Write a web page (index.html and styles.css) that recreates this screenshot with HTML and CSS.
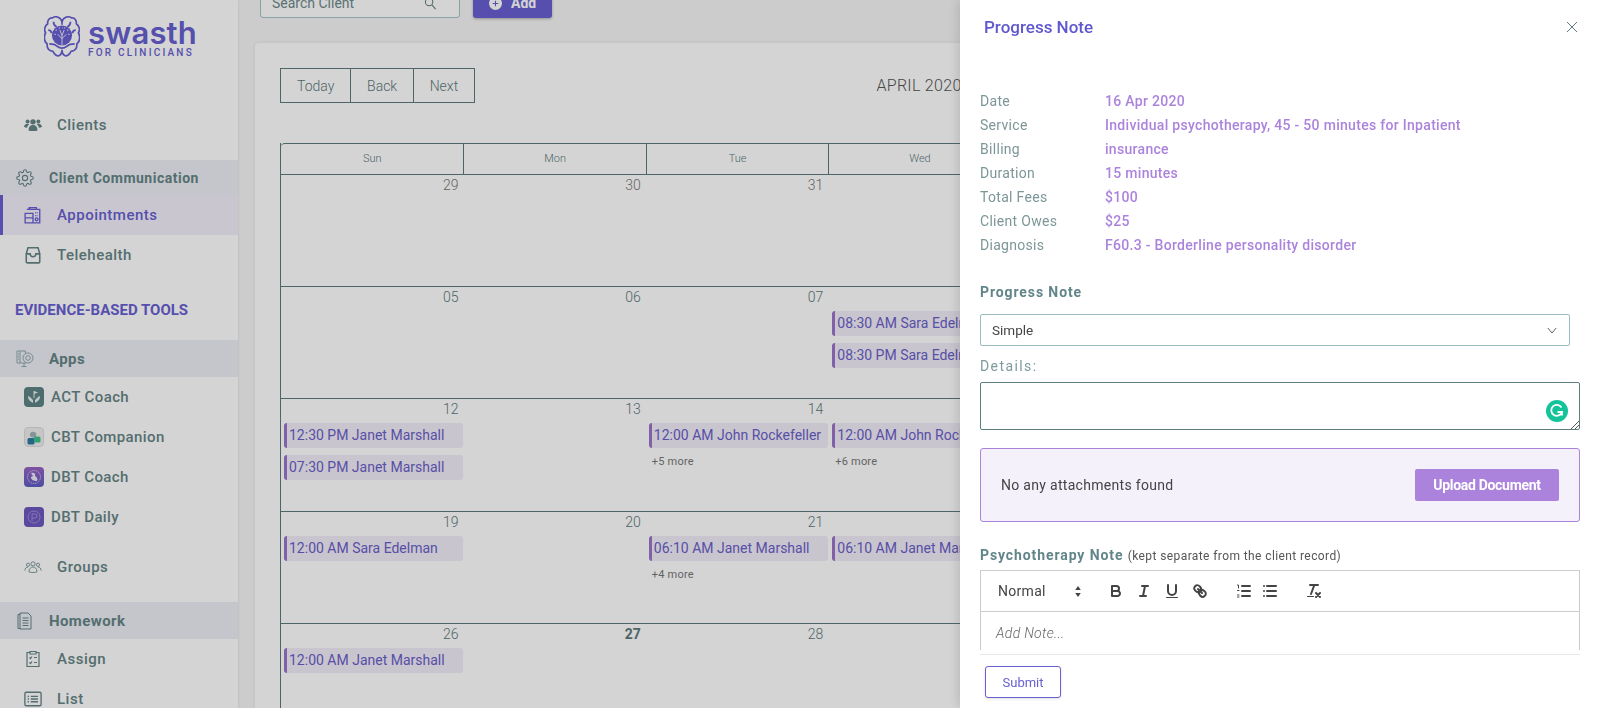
FILE: index.html
```html
<!DOCTYPE html>
<html lang="en">
  <head>
    <meta charset="UTF-8" />
    <title>Swasth - Appointments</title>
    <link rel="stylesheet" href="styles.css">
  </head>
  <body>
    <div class="app">
      <aside class="sidebar">
        <div class="logo">
          <svg class="brain" viewBox="1 1 34 38" fill="none" stroke="#685fd2" stroke-width="1.6" stroke-linejoin="round">
            <path d="M18 6C17 2 12 0 9 2.5 6 2 4 5 4.5 8 1.500 10 .8 14 2.500 16.500 .6 20 1 25 4 27c-.5 4 2 7 5.500 7 1 3 4 5 6 4 1.500-.8 2.500-3 2.500-5 0 2 1 4.200 2.500 5 2 1 5-1 6-4 3.500 0 6-3 5.500-7 3-2 3.400-7 1.500-10.500C35.200 14 34.500 10 31.500 8 32 5 30 2 27 2.500 24 0 19 2 18 6Z"/>
            <path d="M18 6v3M10 6c0 3 1 4 3 5M26 6c0 3-1 4-3 5M5 14c2 0 3 1 3 3M31 14c-2 0-3 1-3 3M6 27c3 0 5 0 7 2 2 1.500 3 2 5 2 2 0 3-.5 5-2 2-2 4-2 7-2"/>
            <circle cx="18" cy="19" r="9.500" fill="#685fd2" stroke="none"/>
            <path d="M18 28v-9M18 22l-4-4M18 22l4-4M18 19l-2-5M18 19l2-5" stroke="#fff" stroke-width=".8"/>
            <path d="M12 14h1M15 12h1M20 12h1M23 14h1M11 18h1M24 18h1M18 12h.6" stroke="#fff" stroke-width="1.100"/>
          </svg>
          <div class="wordmark">
            <span class="wordmark-name">swasth</span>
            <span class="wordmark-sub">FOR CLINICIANS</span>
          </div>
        </div>

        <a class="item item-first">
          <svg class="icon" viewBox="0 0 20 16" fill="#668586">
            <circle cx="10" cy="4.500" r="3"/><circle cx="4" cy="4" r="2.200"/><circle cx="16" cy="4" r="2.200"/>
            <path d="M5 14c0-4 2-6 5-6s5 2 5 6c-2 1-8 1-10 0ZM0 10c0-2 1.500-3.500 4-3.500 1 0 1.500.3 2 .8C4.500 8.300 3.800 9.500 3.500 11 2 11 .8 10.700 0 10ZM20 10c0-2-1.500-3.500-4-3.500-1 0-1.500.3-2 .8 1.500 1 2.200 2.200 2.500 3.700 1.500 0 2.700-.3 3.500-1Z"/>
          </svg>
          Clients
        </a>

        <div class="band band-comm">
          <svg class="band-icon" viewBox="0 0 24 24" fill="none" stroke="#668586" stroke-width="1.500">
            <circle cx="12" cy="12" r="3.500"/>
            <path d="M19.400 15a1.650 1.650 0 0 0 .33 1.820l.06.06a2 2 0 0 1 0 2.830 2 2 0 0 1-2.830 0l-.06-.06a1.650 1.650 0 0 0-1.820-.33 1.650 1.650 0 0 0-1 1.510V21a2 2 0 0 1-2 2 2 2 0 0 1-2-2v-.09A1.650 1.650 0 0 0 9 19.400a1.650 1.650 0 0 0-1.820.33l-.06.06a2 2 0 0 1-2.830 0 2 2 0 0 1 0-2.830l.06-.06a1.650 1.650 0 0 0 .33-1.820 1.650 1.650 0 0 0-1.510-1H3a2 2 0 0 1-2-2 2 2 0 0 1 2-2h.09A1.650 1.650 0 0 0 4.600 9a1.650 1.650 0 0 0-.33-1.820l-.06-.06a2 2 0 0 1 0-2.830 2 2 0 0 1 2.830 0l.06.06a1.650 1.650 0 0 0 1.820.33H9a1.650 1.650 0 0 0 1-1.510V3a2 2 0 0 1 2-2 2 2 0 0 1 2 2v.09a1.650 1.650 0 0 0 1 1.510 1.650 1.650 0 0 0 1.820-.33l.06-.06a2 2 0 0 1 2.830 0 2 2 0 0 1 0 2.830l-.06.06a1.650 1.650 0 0 0-.33 1.820V9a1.650 1.650 0 0 0 1.510 1H21a2 2 0 0 1 2 2 2 2 0 0 1-2 2h-.09a1.650 1.650 0 0 0-1.510 1z"/>
          </svg>
          <span class="band-small">Client Communication</span>
        </div>
        <a class="item active">
          <svg class="icon" viewBox="0 0 16 16" fill="none" stroke="#685fd2" stroke-width="1.200">
            <path d="M5 3V1.500h6V3M2.500 3H14v12H1V6.500h7V15M1 10.500h7M4.500 1v2M10 6h1M12 6h.5M10 8.500h1M12 8.500h.5"/>
            <circle cx="11.200" cy="11.800" r="1.300"/>
          </svg>
          Appointments
        </a>
        <a class="item">
          <svg class="icon" viewBox="0 0 16 16" fill="none" stroke="#668586" stroke-width="1.400">
            <path d="M2 7l1.500-5.500h9L14 7v7a1 1 0 0 1-1 1H3a1 1 0 0 1-1-1ZM2 7h3.500c0 1.500 1 2.500 2.500 2.500S10.500 8.500 10.500 7H14"/>
          </svg>
          Telehealth
        </a>

        <h4 class="side-heading">EVIDENCE-BASED TOOLS</h4>

        <div class="band">
          <svg class="band-icon" viewBox="0 0 18 18" fill="none" stroke="#86a0a1" stroke-width=".9">
            <path d="M10 13H1V1h8.500V3M4 1.500V13M5.500 16.500h5M8 13v3.500M2 4h1M2 6.500h1M2 9h1"/>
            <circle cx="12" cy="8" r="5"/><circle cx="12" cy="8" r="2.300"/>
          </svg>
          Apps
        </div>
        <a class="app-item">
          <svg class="app-icon" viewBox="0 0 20 20">
            <rect width="20" height="20" rx="4" fill="#5d8485"/>
            <path d="M4 9c0 4 2 5 5 7v-3L6 10ZM16 9c0 4-2 5-5 7v-3l3-3Z" fill="#e8f0ee"/>
            <path d="M10 4v7" stroke="#e8f0ee" stroke-width="1"/><path d="M10 4l4 1.500-4 1.500Z" fill="#e8f0ee"/>
          </svg>
          ACT Coach
        </a>
        <a class="app-item">
          <svg class="app-icon" viewBox="0 0 20 20">
            <rect x=".5" y=".5" width="19" height="19" rx="3.500" fill="#efefef" stroke="#dcdcdc"/>
            <path d="M6 9c-1-3 2-5 4-4 2 0 3 2 2 4 0 2-4 2-6 0Z" fill="#9fb2b6"/>
            <rect x="3.500" y="11" width="7" height="6.500" rx="1.500" fill="#2d7aa0"/>
            <rect x="10" y="9.500" width="6.500" height="6" rx="1.500" fill="#3fc08d"/>
          </svg>
          CBT Companion
        </a>
        <a class="app-item">
          <svg class="app-icon" viewBox="0 0 20 20">
            <defs>
              <linearGradient id="dbt" x1="0" y1="0" x2="0" y2="1"><stop offset="0" stop-color="#9a62c2"/><stop offset="1" stop-color="#5f5ec4"/></linearGradient>
            </defs>
            <rect width="20" height="20" rx="4" fill="url(#dbt)"/>
            <circle cx="10" cy="10" r="6.500" fill="none" stroke="#dcd6f2" stroke-width=".9" stroke-dasharray="1.200 .8"/>
            <path d="M7 6c3-1 5 1 4 3 2 1 3 3 2 5-3 0-6-1-6-4l2-1Z" fill="#eeeafa"/>
          </svg>
          DBT Coach
        </a>
        <a class="app-item">
          <svg class="app-icon" viewBox="0 0 20 20">
            <rect width="20" height="20" rx="4" fill="#6e58c0"/>
            <circle cx="10" cy="10" r="6" fill="none" stroke="#a99be0" stroke-width=".8"/>
            <path d="M8 14V7h3a2 2 0 0 1 0 4H8" fill="none" stroke="#a99be0" stroke-width=".8"/>
          </svg>
          DBT Daily
        </a>
        <a class="item item-groups">
          <svg class="icon" viewBox="0 0 20 14" fill="none" stroke="#668586" stroke-width=".9">
            <circle cx="10" cy="3.500" r="2.300"/><circle cx="4.500" cy="4.500" r="1.800"/><circle cx="15.500" cy="4.500" r="1.800"/>
            <path d="M5.500 12.500c0-3.500 2-5.500 4.500-5.500s4.500 2 4.500 5.500c-2 .8-7 .8-9 0ZM1 11c0-2.500 1.500-4 3.500-4M19 11c0-2.500-1.500-4-3.500-4"/>
          </svg>
          Groups
        </a>
        <div class="band band-work">
          <svg class="band-icon" viewBox="0 0 16 18" fill="none" stroke="#668586" stroke-width="1">
            <path d="M3 1h8l3 3v13H3ZM3 2.500H1V16.500h2M5.500 6h6M5.500 8.500h6M5.500 11h6M5.500 13.500h6"/>
          </svg>
          Homework
        </div>
        <a class="item">
          <svg class="icon" viewBox="0 0 16 18" fill="none" stroke="#668586" stroke-width="1.200">
            <path d="M5 2.500H2v14h12v-14h-3M5 1.500h6v2.500H5ZM4.500 7.500l1 1 1.500-2M4.500 12.500l1 1 1.500-2M9 7.500h3M9 12.500h3"/>
          </svg>
          Assign
        </a>
        <a class="item">
          <svg class="icon" viewBox="0 0 20 18" fill="none" stroke="#668586" stroke-width="1.500">
            <rect x="1" y="1.500" width="18" height="15" rx="1.500"/>
            <path d="M7.500 6h8M7.500 9h8M7.500 12h8M4 6h1.500M4 9h1.500M4 12h1.500"/>
          </svg>
          List
        </a>
      </aside>

      <main class="main">
        <div class="topbar">
          <div class="search">
            <span>Search Client</span>
            <svg viewBox="0 0 14 14" fill="none" stroke="#5d7a7b" stroke-width="1.100"><circle cx="5.500" cy="5.500" r="4"/><path d="M8.500 8.500l4 4.500"/></svg>
          </div>
          <button class="add-btn">
            <svg viewBox="0 0 14 14"><circle cx="7" cy="7" r="7" fill="#fff"/><path d="M7 4v6M4 7h6" stroke="#685fd2" stroke-width="1.200"/></svg>
            Add
          </button>
        </div>

        <section class="card">
          <div class="toolbar">
            <div class="btn-group">
              <button>Today</button>
              <button>Back</button>
              <button>Next</button>
            </div>
            <span class="toolbar-label">APRIL 2020</span>
          </div>

          <div class="calendar">
            <div class="cal-head">
              <div>Sun</div><div>Mon</div><div>Tue</div><div>Wed</div><div></div><div></div><div></div>
            </div>

            <div class="week">
              <div class="day"><span class="date off">29</span></div>
              <div class="day"><span class="date off">30</span></div>
              <div class="day"><span class="date off">31</span></div>
            </div>

            <div class="week">
              <div class="day"><span class="date">05</span></div>
              <div class="day"><span class="date">06</span></div>
              <div class="day"><span class="date">07</span></div>
              <div class="day">
                <span class="date"></span>
                <div class="event">08:30 AM Sara Edelman</div>
                <div class="event">08:30 PM Sara Edelman</div>
              </div>
            </div>

            <div class="week">
              <div class="day">
                <span class="date">12</span>
                <div class="event">12:30 PM Janet Marshall</div>
                <div class="event">07:30 PM Janet Marshall</div>
              </div>
              <div class="day"><span class="date">13</span></div>
              <div class="day">
                <span class="date">14</span>
                <div class="event">12:00 AM John Rockefeller</div>
                <div class="more">+5 more</div>
              </div>
              <div class="day">
                <span class="date"></span>
                <div class="event">12:00 AM John Rockefeller</div>
                <div class="more">+6 more</div>
              </div>
            </div>

            <div class="week">
              <div class="day">
                <span class="date">19</span>
                <div class="event">12:00 AM Sara Edelman</div>
              </div>
              <div class="day"><span class="date">20</span></div>
              <div class="day">
                <span class="date">21</span>
                <div class="event">06:10 AM Janet Marshall</div>
                <div class="more">+4 more</div>
              </div>
              <div class="day">
                <span class="date"></span>
                <div class="event">06:10 AM Janet Marshall</div>
              </div>
            </div>

            <div class="week">
              <div class="day">
                <span class="date">26</span>
                <div class="event">12:00 AM Janet Marshall</div>
              </div>
              <div class="day"><span class="date today">27</span></div>
              <div class="day"><span class="date">28</span></div>
            </div>
          </div>
        </section>
      </main>
    </div>

    <div class="overlay"></div>

    <div class="panel">
      <div class="panel-head">
        <h3>Progress Note</h3>
        <svg class="close" viewBox="0 0 12 12" fill="none" stroke="#5d7a7b" stroke-width="1"><path d="M1 1l10 10M11 1L1 11"/></svg>
      </div>

      <div class="panel-body">
        <dl class="meta">
          <dt>Date</dt><dd>16 Apr 2020</dd>
          <dt>Service</dt><dd>Individual psychotherapy, 45 - 50 minutes for Inpatient</dd>
          <dt>Billing</dt><dd>insurance</dd>
          <dt>Duration</dt><dd>15 minutes</dd>
          <dt>Total Fees</dt><dd>$100</dd>
          <dt>Client Owes</dt><dd>$25</dd>
          <dt>Diagnosis</dt><dd>F60.3 - Borderline personality disorder</dd>
        </dl>

        <div class="field-title">Progress Note</div>
        <div class="select">
          <span>Simple</span>
          <svg viewBox="0 0 12 8" fill="none" stroke="#444" stroke-width="1"><path d="M1 1l5 6 5-6"/></svg>
        </div>

        <div class="details-label">Details:</div>
        <div class="textarea">
          <svg class="grammarly" viewBox="0 0 22 22">
            <circle cx="11" cy="11" r="11" fill="#15c39a"/>
            <path d="M15.500 7.500A5.500 5.500 0 1 0 16 12h-4.500M16 12v3.500" fill="none" stroke="#fff" stroke-width="1.800"/>
          </svg>
          <svg class="resize" viewBox="0 0 9 9" stroke="#555" stroke-width="1"><path d="M1 9l8-8M5 9l4-4"/></svg>
        </div>

        <div class="attachments">
          <span>No any attachments found</span>
          <button>Upload Document</button>
        </div>

        <div class="field-title note-title">Psychotherapy Note <small>(kept separate from the client record)</small></div>
        <div class="editor">
          <div class="editor-tools">
            <span class="tool-picker">Normal</span>
            <svg class="tool-arrows" viewBox="0 0 8 14" fill="#444"><path d="M4 1l3 4.500H1ZM4 13l3-4.500H1Z"/></svg>
            <svg class="tool tool-b" viewBox="0 0 18 18" fill="none" stroke="#444" stroke-width="2" stroke-linecap="round" stroke-linejoin="round"><path d="M5,4H9.500A2.500,2.500,0,0,1,12,6.500v0A2.500,2.500,0,0,1,9.500,9H5V4Z"/><path d="M5,9h5.500A2.500,2.500,0,0,1,13,11.500v0A2.500,2.500,0,0,1,10.500,14H5V9Z"/></svg>
            <svg class="tool" viewBox="0 0 18 18" fill="none" stroke="#444" stroke-width="2" stroke-linecap="round"><path d="M7 4h6M5 14h6M8 14l2-10"/></svg>
            <svg class="tool" viewBox="0 0 18 18" fill="none" stroke="#444" stroke-width="2" stroke-linecap="round"><path d="M5,3V9a4,4,0,0,0,4,4h0a4,4,0,0,0,4-4V3"/><rect x="3" y="15" width="12" height="1" rx=".5" fill="#444" stroke="none"/></svg>
            <svg class="tool" viewBox="0 0 18 18" fill="none" stroke="#444" stroke-width="2" stroke-linecap="round"><path d="M7 7l4 4"/><path d="M8.900,4.577a3.476,3.476,0,0,1,.36,4.679A3.476,3.476,0,0,1,4.577,8.900C3.185,7.500,2.035,6.400,4.217,4.217S7.500,3.185,8.900,4.577Z"/><path d="M13.423,9.100a3.476,3.476,0,0,0-4.679-.36,3.476,3.476,0,0,0,.36,4.679c1.392,1.392,2.500,2.542,4.679.36S14.815,10.500,13.423,9.100Z"/></svg>
            <svg class="tool tool-list" viewBox="0 0 18 18" fill="none" stroke="#444" stroke-width="2" stroke-linecap="round"><path d="M7 4h8M7 9h8M7 14h8"/><path d="M2.500 3h1v3M2.500 8.500h1.500M2.500 13h1.500M2.500 15h1.500" stroke-width="1"/></svg>
            <svg class="tool" viewBox="0 0 18 18" fill="none" stroke="#444" stroke-width="2" stroke-linecap="round"><path d="M6 4h9M6 9h9M6 14h9M3 4h0M3 9h0M3 14h0"/></svg>
            <svg class="tool tool-clean" viewBox="0 0 18 18" fill="none" stroke="#444" stroke-width="2" stroke-linecap="round"><path d="M5 3h8M6 12l3.350-9M11 11l4 4M15 11l-4 4"/><rect x="2" y="14" width="7" height="1" rx=".5" fill="#444" stroke="none"/></svg>
          </div>
          <div class="editor-text">Add Note...</div>
        </div>
      </div>

      <div class="panel-foot">
        <button class="submit">Submit</button>
      </div>
    </div>
  </body>
</html>
```

FILE: styles.css
```css
html,
body {
  margin: 0;
  padding: 0;
  height: 100%;
  overflow: hidden;
  font-family: Roboto, "Liberation Sans", sans-serif;
  color: #5d7a7b;
  background: #f6f6f6;
}

button {
  font-family: inherit;
  cursor: pointer;
}

.app {
  display: flex;
  height: 708px;
  overflow: hidden;
}

/* sidebar */

.sidebar {
  width: 238px;
  flex-shrink: 0;
  background: #fff;
  color: #668586;
  box-shadow: 1px 0 2px rgba(0, 0, 0, 0.06);
}

.logo {
  display: flex;
  height: 105px;
  padding: 16px 0 0 44px;
  box-sizing: border-box;
  color: #685fd2;
}

.brain {
  width: 36px;
  height: 41px;
  flex-shrink: 0;
}

.wordmark {
  display: flex;
  flex-direction: column;
  margin: 3px 0 0 8px;
}

.wordmark-name {
  font-family: Inter, sans-serif;
  font-size: 31px;
  font-weight: 600;
  line-height: 28px;
  letter-spacing: 0.2px;
}

.wordmark-sub {
  font-size: 10px;
  font-weight: 500;
  line-height: 12px;
  letter-spacing: 2.2px;
  white-space: nowrap;
}

.item {
  display: flex;
  align-items: center;
  height: 40px;
  padding-left: 24px;
  font-size: 15px;
  font-weight: 500;
  letter-spacing: 0.5px;
}

.item.active {
  background: #f3eff9;
  color: #685fd2;
  border-left: 3px solid #685fd2;
  padding-left: 21px;
}

.item-groups {
  margin-top: 10px;
}

.icon {
  width: 18px;
  height: 18px;
  margin-right: 15px;
  flex-shrink: 0;
}

.band {
  display: flex;
  align-items: center;
  height: 37px;
  padding-left: 16px;
  background: #eceef5;
  font-size: 15px;
  font-weight: 700;
  letter-spacing: 0.4px;
}

.band-comm {
  height: 35px;
  margin-top: 15px;
}

.band-work {
  margin-top: 15px;
}

.band-small {
  font-size: 14px;
  font-weight: 700;
  letter-spacing: 0.5px;
}

.band-icon {
  width: 18px;
  height: 18px;
  margin-right: 15px;
  flex-shrink: 0;
}

.side-heading {
  margin: 15px 0 10px;
  height: 40px;
  padding-left: 15px;
  line-height: 40px;
  font-size: 15px;
  font-weight: 700;
  color: #685fd2;
}

.app-item {
  display: flex;
  align-items: center;
  height: 40px;
  padding-left: 24px;
  font-size: 15px;
  font-weight: 500;
  letter-spacing: 0.4px;
}

.app-icon {
  width: 20px;
  height: 20px;
  margin-right: 7px;
  flex-shrink: 0;
}

/* main */

.main {
  flex: 1;
  min-width: 0;
  padding: 0 17px;
}

.topbar {
  display: flex;
  margin: -12px 0 25px 5px;
  gap: 13px;
}

.search {
  display: flex;
  align-items: center;
  justify-content: space-between;
  box-sizing: border-box;
  width: 200px;
  height: 30px;
  padding: 0 22px 0 11px;
  background: #fff;
  border: 1px solid #a4c4c6;
  border-radius: 3px;
  font-size: 14px;
  color: #6d8a8b;
}

.search svg {
  width: 13px;
  height: 13px;
}

.add-btn {
  display: flex;
  align-items: center;
  gap: 9px;
  width: 79px;
  height: 30px;
  padding: 0 0 0 16px;
  background: #685fd2;
  border: 0;
  border-radius: 3px;
  box-shadow: 0 1px 3px rgba(0, 0, 0, 0.3);
  color: #fff;
  font-size: 14px;
  font-weight: 700;
}

.add-btn svg {
  width: 13px;
  height: 13px;
}

.card {
  background: #fff;
  border-radius: 4px;
  padding: 25px;
  box-shadow: 0 0 4px rgba(0, 0, 0, 0.08);
  height: 800px;
}

.toolbar {
  display: grid;
  grid-template-columns: 1fr auto 1fr;
  align-items: center;
  height: 35px;
  margin-bottom: 40px;
}

.btn-group {
  display: flex;
}

.btn-group button {
  height: 35px;
  padding: 0 15.7px;
  margin-left: -1px;
  background: none;
  border: 1px solid #5d7a7b;
  font-size: 14px;
  font-weight: 300;
  color: #5d7a7b;
}

.btn-group button:first-child {
  margin-left: 0;
  padding: 0 16px;
}

.toolbar-label {
  grid-column: 2;
  font-size: 16px;
  font-weight: 300;
  letter-spacing: 0.3px;
  color: #555;
}

.calendar {
  border-left: 1px solid #5d7a7b;
}

.cal-head {
  display: grid;
  grid-template-columns: repeat(7, 1fr);
  height: 32px;
  box-sizing: border-box;
  border-top: 1px solid #5d7a7b;
  border-bottom: 1px solid #5d7a7b;
  border-top-left-radius: 4px;
  font-size: 11px;
  font-weight: 300;
  line-height: 30px;
  text-align: center;
}

.cal-head div + div {
  border-left: 1px solid #5d7a7b;
}

.week {
  display: grid;
  grid-template-columns: repeat(7, minmax(0, 1fr));
  height: 112.2px;
  box-sizing: border-box;
  border-bottom: 1px solid #5d7a7b;
}

.day {
  padding-left: 3px;
  min-width: 0;
}

.day:nth-child(4) {
  padding-left: 4px;
}

.date {
  display: block;
  height: 24px;
  padding-right: 5px;
  font-size: 14px;
  font-weight: 300;
  line-height: 20px;
  text-align: right;
}

.date.off {
  color: #777;
}

.date.today {
  font-weight: 700;
}

.event {
  box-sizing: border-box;
  height: 25px;
  margin-bottom: 7px;
  padding-left: 2px;
  background: #f1edf9;
  border-left: 3px solid #9a74c9;
  border-radius: 3px;
  color: #6a5fc8;
  font-size: 14px;
  line-height: 24px;
  white-space: nowrap;
  overflow: hidden;
}

.more {
  margin-top: -1px;
  padding-left: 3px;
  font-size: 11px;
  line-height: 15px;
  letter-spacing: 0.2px;
  color: #777;
}

/* dim layer and slide-in panel */

.overlay {
  position: fixed;
  top: 0;
  left: 0;
  right: 0;
  bottom: 0;
  background: rgba(0, 0, 0, 0.17);
}

.panel {
  position: fixed;
  top: 0;
  right: 0;
  bottom: 0;
  display: flex;
  flex-direction: column;
  box-sizing: border-box;
  width: 640px;
  padding: 0 20px;
  background: #fff;
  box-shadow: -3px 0 10px rgba(0, 0, 0, 0.12);
}

.panel-head {
  display: flex;
  align-items: center;
  justify-content: space-between;
  height: 52px;
  padding: 2px 2px 0 4px;
  box-sizing: border-box;
  flex-shrink: 0;
}

.panel-head h3 {
  margin: 0;
  font-size: 17px;
  font-weight: 500;
  color: #6058cf;
}

.close {
  width: 12px;
  height: 12px;
}

.panel-body {
  flex: 1;
  min-height: 0;
  overflow: hidden;
  margin-bottom: 4px;
}

.meta {
  display: grid;
  grid-template-columns: 125px 1fr;
  grid-auto-rows: 24px;
  margin: 37px 0 0;
  font-size: 14px;
  line-height: 24px;
}

.meta dt {
  color: #7d9697;
  letter-spacing: 0.3px;
}

.meta dd {
  margin: 0;
  color: #ab83dd;
  font-weight: 500;
  letter-spacing: 0.3px;
}

.field-title {
  margin-top: 25px;
  font-size: 14px;
  font-weight: 700;
  line-height: 20px;
  letter-spacing: 0.9px;
  color: #62858a;
}

.select {
  display: flex;
  align-items: center;
  justify-content: space-between;
  box-sizing: border-box;
  width: 590px;
  height: 32px;
  margin-top: 12px;
  padding: 0 12px 0 11px;
  border: 1px solid #9abcc2;
  border-radius: 2px;
  font-size: 13.5px;
  color: #444;
}

.select svg {
  width: 10px;
  height: 7px;
}

.details-label {
  margin-top: 10px;
  font-size: 14px;
  line-height: 20px;
  letter-spacing: 1.4px;
  color: #7d9a9c;
}

.textarea {
  position: relative;
  box-sizing: border-box;
  height: 48px;
  margin-top: 6px;
  border: 1px solid #5d7f80;
  border-radius: 2px;
}

.grammarly {
  position: absolute;
  right: 11px;
  top: 17px;
  width: 22px;
  height: 22px;
}

.resize {
  position: absolute;
  right: 0;
  bottom: 0;
  width: 9px;
  height: 9px;
}

.attachments {
  display: flex;
  align-items: center;
  justify-content: space-between;
  box-sizing: border-box;
  height: 74px;
  margin-top: 18px;
  padding: 0 20px;
  background: #f4f1fb;
  border: 1px solid #ab83dd;
  border-radius: 3px;
  font-size: 14px;
  letter-spacing: 0.3px;
  color: #444;
}

.attachments button {
  width: 144px;
  height: 32px;
  background: #ab83dd;
  border: 0;
  border-radius: 2px;
  color: #fff;
  font-size: 14px;
  font-weight: 700;
  letter-spacing: -0.3px;
}

.note-title {
  margin-top: 23px;
}

.note-title small {
  font-size: 12px;
  font-weight: 400;
  letter-spacing: 0.4px;
  color: #555;
}

.editor {
  margin-top: 4px;
  border: 1px solid #ccc;
  height: 120px;
  box-sizing: border-box;
}

.editor-tools {
  display: flex;
  align-items: center;
  height: 41px;
  padding-left: 17px;
  border-bottom: 1px solid #ccc;
  box-sizing: border-box;
}

.tool-picker {
  width: 76px;
  font-size: 14px;
  letter-spacing: 0.3px;
  color: #444;
}

.tool-arrows {
  width: 8px;
  height: 13px;
  margin-right: 25px;
}

.tool {
  width: 18px;
  height: 18px;
  margin-right: 10px;
}

.tool-list {
  margin-left: 16px;
  margin-right: 8px;
}

.tool-clean {
  margin-left: 16px;
}

.editor-text {
  padding: 13px 15px;
  font-size: 14px;
  font-style: italic;
  font-weight: 300;
  letter-spacing: 0.3px;
  color: #666;
}

.panel-foot {
  flex-shrink: 0;
  height: 54px;
  box-sizing: border-box;
  padding: 11px 0 0 5px;
  border-top: 1px solid #e8e8e8;
}

.submit {
  width: 76px;
  height: 32px;
  background: #fff;
  border: 1px solid #6860d2;
  border-radius: 3px;
  box-shadow: 0 1px 3px rgba(0, 0, 0, 0.12);
  color: #6860d2;
  font-size: 13px;
}
```
